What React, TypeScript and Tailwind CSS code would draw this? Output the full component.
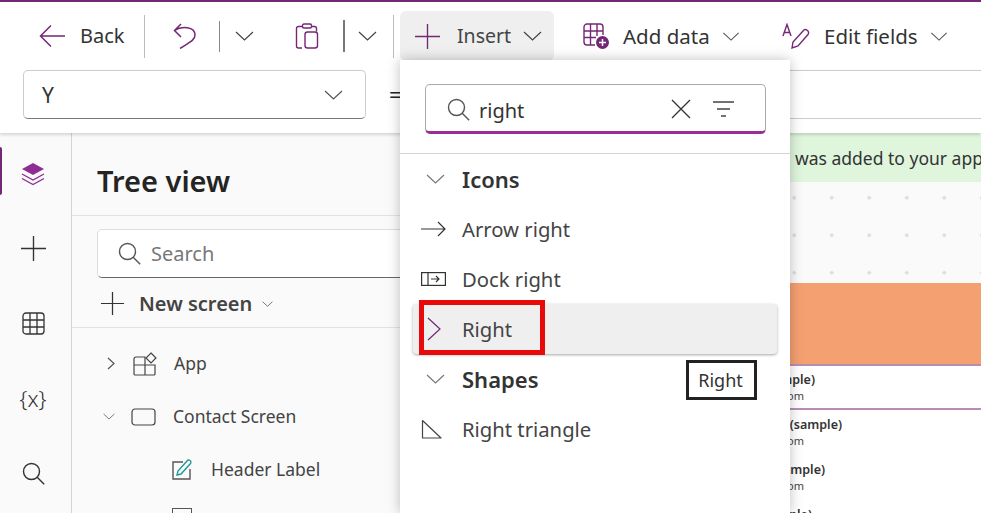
import type { ReactNode } from "react"

const purple = "#742774"

function Chevron({ className = "w-[19px] h-[10px]", stroke = "#444" }: { className?: string; stroke?: string }) {
  return (
    <svg viewBox="0 0 19 10" className={className} fill="none" stroke={stroke} strokeWidth="1.2">
      <path d="M1 1l8.5 8L18 1" />
    </svg>
  )
}

function Plus({ size = 25, stroke = "#333" }: { size?: number; stroke?: string }) {
  return (
    <svg width={size} height={size} viewBox="0 0 24 24" fill="none" stroke={stroke} strokeWidth="1.3">
      <path d="M12 0v24M0 12h24" />
    </svg>
  )
}

function SearchIcon({ stroke = "#555" }: { stroke?: string }) {
  return (
    <svg width="23" height="23" viewBox="0 0 23 23" fill="none" stroke={stroke} strokeWidth="1.4">
      <circle cx="9.5" cy="9.5" r="8" />
      <path d="M15.2 15.2l7 7" />
    </svg>
  )
}

function Sep({ h, color = "#bbb", w = "w-px" }: { h: string; color?: string; w?: string }) {
  return <div className={`${w} ${h}`} style={{ backgroundColor: color }} />
}

function TreeRow({ indent, chevron, icon, label, gap }: { indent: string; chevron?: ReactNode; icon: ReactNode; label: string; gap: string }) {
  return (
    <div className={`flex items-center h-[53px] ${indent} text-[#444] text-[17.5px]`}>
      {chevron}
      {icon}
      <span className={gap}>{label}</span>
    </div>
  )
}

function MenuItem({ icon, label }: { icon: ReactNode; label: string }) {
  return (
    <div className="flex items-center h-[50px] pl-[21px] text-[#444] text-[20.25px]">
      <div className="w-[41px] flex items-center">{icon}</div>
      <span>{label}</span>
    </div>
  )
}

function MenuHeader({ label }: { label: string }) {
  return (
    <div className="flex items-center h-[50px] pl-[26px] text-[#333] text-[22px] font-semibold">
      <div className="w-[36px] flex items-center">
        <Chevron stroke="#777" />
      </div>
      <span>{label}</span>
    </div>
  )
}

function ContactRow({ name, width, divider }: { name: string; width: string; divider?: boolean }) {
  return (
    <div className={`shrink-0 overflow-hidden leading-[16px] ${divider ? "h-[44px] pt-[6px] border-b-[2px] border-[#b88db5]" : "h-[45px] pt-[7px]"}`}>
      <div className={`${width} text-right whitespace-nowrap text-[#333] text-[12.5px] font-semibold`}>{name}</div>
      <div className="w-[354px] text-right whitespace-nowrap text-[#444] text-[11px]">a@b.com</div>
    </div>
  )
}

export default function App() {
  return (
    <div className="relative h-[513px] overflow-hidden flex flex-col bg-white border-t-2 border-[#742774] text-[#333]" style={{ fontFamily: '"Noto Sans", "Open Sans", sans-serif' }}>
      {/* toolbar */}
      <div className="h-[68px] flex items-center shrink-0 text-[20.5px] text-[#333]">
        <div className="w-[144px] pl-[39px] flex items-center">
          <svg width="27" height="24" viewBox="0 0 27 24" fill="none" stroke={purple} strokeWidth="1.5">
            <path d="M26 12H2M12 1.5L1.5 12 12 22.5" />
          </svg>
          <span className="ml-[14px] text-[20px]">Back</span>
        </div>
        <Sep h="h-[43px]" />
        <div className="w-[74px] pl-[28px] flex items-center">
          <svg width="23" height="26" viewBox="0 0 23 26" fill="none" stroke={purple} strokeWidth="1.5">
            <path d="M8 1L1.500 7.500l6.500 6.500M1.500 7.500C8 3 22 3 22 12c0 5-5 7-15 13.500" />
          </svg>
        </div>
        <Sep h="h-[31px]" color="#888" />
        <div className="w-[75px] pl-[15px] flex items-center">
          <Chevron />
        </div>
        <div className="w-[48px] flex items-center">
          <svg width="24" height="26" viewBox="0 0 24 26" fill="none" stroke={purple} strokeWidth="1.4">
            <path d="M7 3.5H3.5a2 2 0 0 0-2 2V23a2 2 0 0 0 2 2H7M17 3.5h2.5a2 2 0 0 1 2 2v3" />
            <rect x="7.5" y="1" width="9" height="4" rx="1.5" />
            <rect x="10" y="9" width="12.5" height="16" rx="2.5" />
          </svg>
        </div>
        <Sep h="h-[32px]" color="#777" w="w-[2px]" />
        <div className="w-[48px] pl-[13px] flex items-center">
          <Chevron />
        </div>
        <Sep h="h-[43px]" />
        <div className="ml-[6px] w-[154px] h-[50px] rounded-md bg-[#efefef] flex items-center pl-[15px]">
          <Plus stroke={purple} />
          <span className="ml-[17px] text-[#444] text-[19.5px]">Insert</span>
          <div className="ml-[12px]">
            <Chevron />
          </div>
        </div>
        <div className="ml-[29px] w-[199px] flex items-center">
          <svg width="26" height="26" viewBox="0 0 26 26" fill="none" stroke={purple} strokeWidth="1.4">
            <path d="M12 22H4a3 3 0 0 1-3-3V4a3 3 0 0 1 3-3h13a3 3 0 0 1 3 3v8M1 8h19M1 14.500h12M7.500 1v21M14 1v12" />
            <circle cx="19.500" cy="19.500" r="6.500" fill={purple} stroke="none" />
            <path d="M19.500 16v7M16 19.500h7" stroke="#fff" strokeWidth="1.5" />
          </svg>
          <span className="ml-[14px]">Add data</span>
          <div className="ml-[12px]">
            <Chevron className="w-[18px] h-[9px]" stroke="#555" />
          </div>
        </div>
        <div className="flex items-center">
          <svg width="28" height="26" viewBox="0 0 28 26" fill="none" stroke={purple} strokeWidth="1.4">
            <path d="M1 13L5 1.500 9 13M2.300 9.500h5.400M10 25l1-6L21 8a3 3 0 0 1 5 3.500L16 23z" />
          </svg>
          <span className="ml-[14px]">Edit fields</span>
          <div className="ml-[12px]">
            <Chevron className="w-[18px] h-[9px]" stroke="#555" />
          </div>
        </div>
      </div>

      {/* formula row */}
      <div className="h-[63px] shrink-0 flex items-start pl-[23px] shadow-[0_2px_3px_rgba(0,0,0,0.15)] z-10 bg-white">
        <div className="w-[343px] h-[49px] bg-white border border-[#ccc] border-b-[#777] rounded-[5px] flex items-center justify-between pl-[18px] pr-[22px] text-[21px]">
          <span className="pt-[3px]">Y</span>
          <Chevron stroke="#555" />
        </div>
        <span className="ml-[23px] mt-[8px] text-[22px] text-[#222]">=</span>
        <div className="flex-1 ml-[10px] h-[49px] border-y border-[#ccc]" />
      </div>

      {/* body */}
      <div className="flex-1 flex min-h-0">
        {/* rail */}
        <div className="w-[72px] shrink-0 relative bg-[#fafafa] border-r border-[#d4d4d4] flex flex-col pt-[3px] pr-[5px] text-[#333]">
          <div className="absolute left-0 top-[14px] w-[2px] h-[48px] rounded-r bg-[#742774]" />
          <div className="h-[75px] shrink-0 flex items-center justify-center">
            <svg width="24" height="24" viewBox="0 0 24 24" fill="none">
              <path d="M12 1l11 6-11 6L1 7z" fill="#8f2d94" />
              <path d="M1 12l11 6 11-6M1 16.500l11 6 11-6" stroke="#8f2d94" strokeWidth="1.4" />
            </svg>
          </div>
          <div className="h-[75px] shrink-0 flex items-center justify-center">
            <Plus />
          </div>
          <div className="h-[75px] shrink-0 flex items-center justify-center">
            <svg width="23" height="23" viewBox="0 0 23 23" fill="none" stroke="#333" strokeWidth="1.3">
              <rect x="1" y="1" width="21" height="21" rx="3" />
              <path d="M1 8h21M1 15h21M8 1v21M15 1v21" />
            </svg>
          </div>
          <div className="h-[75px] shrink-0 flex items-center justify-center text-[22px] font-light">{"{x}"}</div>
          <div className="h-[75px] shrink-0 flex items-center justify-center">
            <SearchIcon stroke="#333" />
          </div>
        </div>

        {/* tree view */}
        <div className="w-[378px] shrink-0 bg-[#fafafa] flex flex-col">
          <div className="h-[83px] shrink-0 flex items-center pl-[25px] text-[29px] font-semibold text-[#242424] border-b border-[#e2e2e2] pt-[14px]">Tree view</div>
          <div className="px-[25px] pt-[13px] shrink-0">
            <div className="h-[49px] w-[400px] bg-white border border-[#ddd] border-b-[#666] rounded-[5px] flex items-center pl-[20px] text-[#777] text-[20px]">
              <SearchIcon />
              <span className="ml-[10px]">Search</span>
            </div>
          </div>
          <div className="h-[50px] shrink-0 flex items-center pl-[29px] pt-[2px] border-b border-[#e2e2e2] text-[#444] text-[20px] font-semibold">
            <Plus size={23} />
            <span className="ml-[15px]">New screen</span>
            <div className="ml-[10px]">
              <Chevron className="w-[11px] h-[6px]" />
            </div>
          </div>
          <div className="pt-[9px]">
            <TreeRow
              indent="pl-[35px]"
              gap="ml-[17px]"
              label="App"
              chevron={
                <svg width="8" height="13" viewBox="0 0 8 13" fill="none" stroke="#555" strokeWidth="1.2" className="mr-[18px]">
                  <path d="M1 1l6 5.500L1 12" />
                </svg>
              }
              icon={
                <svg width="24" height="24" viewBox="0 0 24 24" fill="none" stroke="#444" strokeWidth="1.2">
                  <path d="M12 5H3a2 2 0 0 0-2 2v15a1 1 0 0 0 1 1h19a1 1 0 0 0 1-1v-9H12zM12 13H1M12 13v10" />
                  <path d="M18 1l5 5-5 5-5-5z" />
                </svg>
              }
            />
            <TreeRow
              indent="pl-[31px]"
              gap="ml-[17px]"
              label="Contact Screen"
              chevron={
                <div className="mr-[16px]">
                  <Chevron className="w-[12px] h-[7px]" stroke="#555" />
                </div>
              }
              icon={
                <svg width="25" height="18" viewBox="0 0 25 18" fill="none" stroke="#444" strokeWidth="1.2">
                  <rect x="1" y="1" width="23" height="16" rx="3" />
                </svg>
              }
            />
            <TreeRow
              indent="pl-[100px]"
              gap="ml-[19px]"
              label="Header Label"
              icon={
                <svg width="20" height="21" viewBox="0 0 20 21" fill="none" strokeWidth="1.4">
                  <path d="M11 3H1v17h17V10" stroke="#555" />
                  <path d="M5 16l1-4 9-10a2 2 0 0 1 3.500 2.500L9 15z" stroke="#1f9a96" />
                </svg>
              }
            />
            <div className="ml-[100px] mt-[12px] w-[20px] h-[12px] border-t border-x border-[#555]" />
          </div>
        </div>

        {/* canvas */}
        <div className="flex-1 min-w-0 overflow-hidden bg-white flex flex-col">
          <div className="h-[49px] shrink-0 flex items-center whitespace-nowrap bg-[#dff6dd] text-[#333] text-[17.5px] pt-[1px]">
            <span className="ml-[345px]">was added to your app</span>
          </div>
          <div className="h-[101px] shrink-0 bg-[#fafafa] bg-[radial-gradient(circle,#dddddd_1.5px,transparent_2px)] bg-[length:37.5px_37.5px] bg-[position:-12px_-3px]" />
          <div className="h-[81px] shrink-0 bg-[#f5a071]" />
          <div className="h-[2px] shrink-0 bg-[#b88db5]" />
          <ContactRow name="(sample)" width="w-[365px]" divider />
          <ContactRow name="Ann (sample)" width="w-[392px]" />
          <ContactRow name="Bo (sample)" width="w-[375px]" />
          <ContactRow name="(sample)" width="w-[362px]" />
        </div>
      </div>

      {/* insert flyout */}
      <div className="absolute left-[400px] top-[58px] bottom-0 w-[390px] z-20 bg-white shadow-[0_0_12px_rgba(0,0,0,0.25)] flex flex-col">
        <div className="h-[94px] shrink-0 border-b border-[#d4d4d4] pt-[24px] pl-[25px]">
          <div className="w-[341px] h-[50px] border border-[#aaa] border-b-[3px] border-b-[#9a2d96] rounded-[5px] flex items-center pl-[21px] pr-[30px] pt-[2px] text-[20px] text-[#333]">
            <SearchIcon />
            <span className="ml-[9px] flex-1 pt-[3px]">right</span>
            <svg width="20" height="20" viewBox="0 0 20 20" fill="none" stroke="#333" strokeWidth="1.3">
              <path d="M1 1l18 18M19 1L1 19" />
            </svg>
            <svg width="23" height="16" viewBox="0 0 23 16" fill="none" stroke="#444" strokeWidth="1.4" className="ml-[21px]">
              <path d="M1 1h21M5 8h13M9 15h5" />
            </svg>
          </div>
        </div>
        <div>
          <MenuHeader label="Icons" />
          <MenuItem
            label="Arrow right"
            icon={
              <svg width="25" height="16" viewBox="0 0 25 16" fill="none" stroke="#333" strokeWidth="1.2">
                <path d="M0 8h24M17 1l7 7-7 7" />
              </svg>
            }
          />
          <MenuItem
            label="Dock right"
            icon={
              <svg width="25" height="14" viewBox="0 0 25 14" fill="none" stroke="#333" strokeWidth="1.2">
                <rect x="0.600" y="0.600" width="23.800" height="12.800" />
                <path d="M7 1v12M10 7h8M15 4l3 3-3 3" />
              </svg>
            }
          />
          <div className="mx-[13px] h-[50px] rounded bg-[#efefef] shadow-[0_1px_3px_rgba(0,0,0,0.35)] flex items-center pl-[14px] text-[#444] text-[20.25px]">
            <div className="w-[35px]">
              <svg width="14" height="24" viewBox="0 0 14 24" fill="none" stroke={purple} strokeWidth="1.2">
                <path d="M1 1l12 11L1 23" />
              </svg>
            </div>
            <span>Right</span>
          </div>
          <MenuHeader label="Shapes" />
          <MenuItem
            label="Right triangle"
            icon={
              <svg width="21" height="20" viewBox="0 0 21 20" fill="none" stroke="#444" strokeWidth="1.2">
                <path d="M1.500 1.500L20 19H1.500z" strokeLinejoin="round" />
              </svg>
            }
          />
        </div>
      </div>

      {/* highlight + tooltip */}
      <div className="absolute left-[419px] top-[298px] w-[126px] h-[55px] z-30 border-[5px] border-[#e80a0a]" />
      <div className="absolute left-[686px] top-[358px] w-[71px] h-[40px] z-30 bg-white border-[3px] border-[#222] flex items-center justify-center pr-[2px] text-[18px] text-[#333]">Right</div>
    </div>
  )
}
